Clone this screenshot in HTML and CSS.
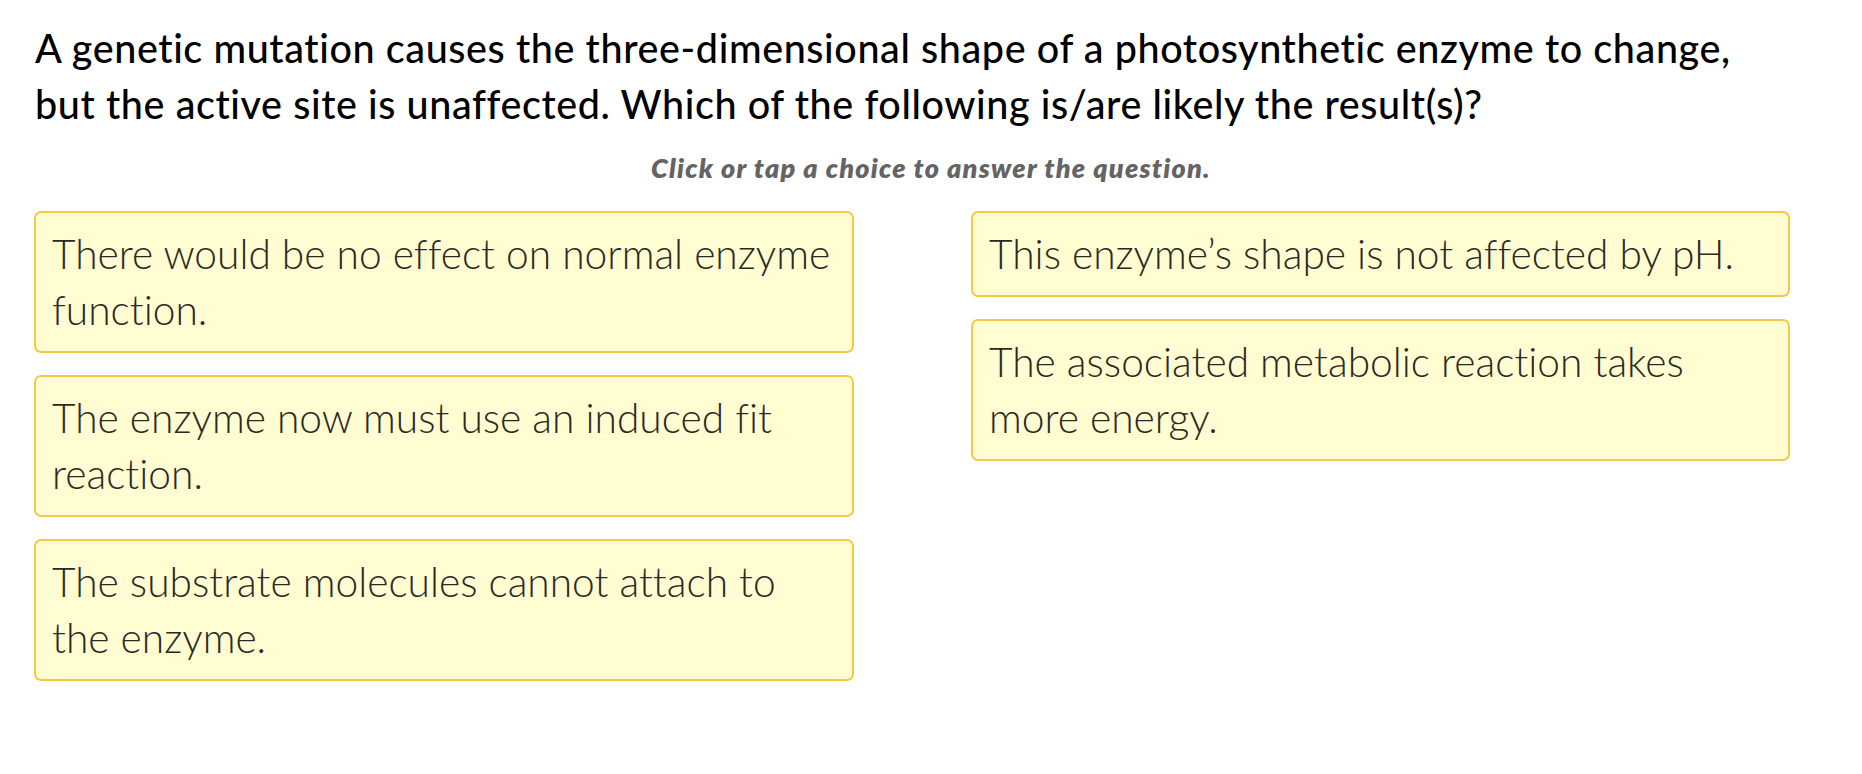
FILE: index.html
```html
<!DOCTYPE html>
<html lang="en">
<head>
<meta charset="utf-8">
<title>Question</title>
<link rel="stylesheet" href="styles.css">
</head>
<body>
<main class="page">
  <h1 class="question">A genetic mutation causes the three-dimensional shape of a photosynthetic enzyme to change, but the active site is unaffected. Which of the following is/are likely the result(s)?</h1>
  <p class="instruction">Click or tap a choice to answer the question.</p>
  <div class="choices">
    <div class="column">
      <button class="choice">There would be no effect on normal enzyme function.</button>
      <button class="choice">The enzyme now must use an induced fit reaction.</button>
      <button class="choice">The substrate molecules cannot attach to the enzyme.</button>
    </div>
    <div class="column">
      <button class="choice">This enzyme’s shape is not affected by pH.</button>
      <button class="choice">The associated metabolic reaction takes more energy.</button>
    </div>
  </div>
</main>
</body>
</html>
```
FILE: styles.css
```css
html, body {
  margin: 0;
  padding: 0;
  background: #ffffff;
}

.page {
  font-family: "Lato", "Open Sans", "Liberation Sans", sans-serif;
  font-variant-ligatures: none;
  padding-top: 20px;
}

.question {
  width: 1755px;
  margin: 0 0 0 35px;
  font-size: 39.5px;
  letter-spacing: 0.6px;
  line-height: 56px;
  font-weight: 500;
  color: #000000;
}

.instruction {
  margin: 18px 0 0 0;
  text-align: center;
  font-size: 27px;
  letter-spacing: 1.25px;
  line-height: 36px;
  font-weight: 800;
  font-style: italic;
  color: #646464;
}

.choices {
  display: grid;
  grid-template-columns: 820px 819px;
  column-gap: 117px;
  margin: 25px 0 0 34px;
  align-items: start;
}

.column {
  display: flex;
  flex-direction: column;
  gap: 22px;
}

.choice {
  display: block;
  width: 100%;
  box-sizing: border-box;
  text-align: left;
  font-family: inherit;
  font-variant-ligatures: none;
  font-size: 40.7px;
  line-height: 56px;
  font-weight: 300;
  color: #2a2a22;
  background: #fffdd1;
  border: 2px solid #f6ca46;
  border-radius: 7px;
  padding: 13px 10px 13px 16px;
  margin: 0;
  cursor: pointer;
}
```
